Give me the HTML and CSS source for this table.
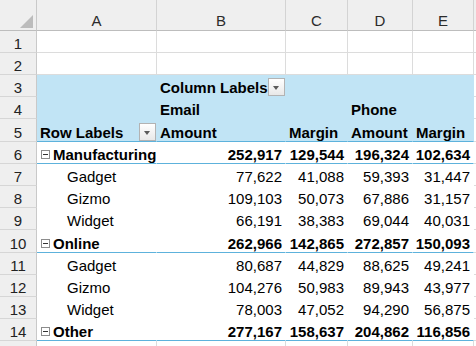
FILE: index.html
```html
<!DOCTYPE html>
<html lang="en">
<head>
    <meta charset="UTF-8">
    <title>Pivot table</title>
    <link rel="stylesheet" href="styles.css">
</head>
<body>
    <div class="sheet">
        <!-- column letters -->
        <div class="corner"></div>
        <div class="col">A</div>
        <div class="col">B</div>
        <div class="col">C</div>
        <div class="col">D</div>
        <div class="col">E</div>
        <div class="col"></div>

        <!-- empty rows -->
        <div class="rn">1</div>
        <div class="c"></div><div class="c"></div><div class="c"></div><div class="c"></div><div class="c"></div><div class="c"></div>
        <div class="rn">2</div>
        <div class="c"></div><div class="c"></div><div class="c"></div><div class="c"></div><div class="c"></div><div class="c"></div>

        <!-- pivot header -->
        <div class="rn">3</div>
        <div class="c ph"></div>
        <div class="c ph b">Column Labels<span class="drop"></span></div>
        <div class="c ph"></div><div class="c ph"></div><div class="c ph"></div>
        <div class="c"></div>

        <div class="rn">4</div>
        <div class="c ph"></div>
        <div class="c ph b">Email</div>
        <div class="c ph"></div>
        <div class="c ph b">Phone</div>
        <div class="c ph"></div>
        <div class="c"></div>

        <div class="rn">5</div>
        <div class="c ph last b">Row Labels<span class="drop"></span></div>
        <div class="c ph last b">Amount</div>
        <div class="c ph last b">Margin</div>
        <div class="c ph last b">Amount</div>
        <div class="c ph last b">Margin</div>
        <div class="c"></div>

        <!-- Manufacturing -->
        <div class="rn">6</div>
        <div class="c pb grp b"><span class="tog"></span>Manufacturing</div>
        <div class="c pb grp b num">252,917</div>
        <div class="c pb grp b num">129,544</div>
        <div class="c pb grp b num">196,324</div>
        <div class="c pb grp b num">102,634</div>
        <div class="c"></div>

        <div class="rn">7</div>
        <div class="c pb item">Gadget</div>
        <div class="c pb num">77,622</div>
        <div class="c pb num">41,088</div>
        <div class="c pb num">59,393</div>
        <div class="c pb num">31,447</div>
        <div class="c"></div>

        <div class="rn">8</div>
        <div class="c pb item">Gizmo</div>
        <div class="c pb num">109,103</div>
        <div class="c pb num">50,073</div>
        <div class="c pb num">67,886</div>
        <div class="c pb num">31,157</div>
        <div class="c"></div>

        <div class="rn">9</div>
        <div class="c pb item">Widget</div>
        <div class="c pb num">66,191</div>
        <div class="c pb num">38,383</div>
        <div class="c pb num">69,044</div>
        <div class="c pb num">40,031</div>
        <div class="c"></div>

        <!-- Online -->
        <div class="rn">10</div>
        <div class="c pb grp b"><span class="tog"></span>Online</div>
        <div class="c pb grp b num">262,966</div>
        <div class="c pb grp b num">142,865</div>
        <div class="c pb grp b num">272,857</div>
        <div class="c pb grp b num">150,093</div>
        <div class="c"></div>

        <div class="rn">11</div>
        <div class="c pb item">Gadget</div>
        <div class="c pb num">80,687</div>
        <div class="c pb num">44,829</div>
        <div class="c pb num">88,625</div>
        <div class="c pb num">49,241</div>
        <div class="c"></div>

        <div class="rn">12</div>
        <div class="c pb item">Gizmo</div>
        <div class="c pb num">104,276</div>
        <div class="c pb num">50,983</div>
        <div class="c pb num">89,943</div>
        <div class="c pb num">43,977</div>
        <div class="c"></div>

        <div class="rn">13</div>
        <div class="c pb item">Widget</div>
        <div class="c pb num">78,003</div>
        <div class="c pb num">47,052</div>
        <div class="c pb num">94,290</div>
        <div class="c pb num">56,875</div>
        <div class="c"></div>

        <!-- Other -->
        <div class="rn">14</div>
        <div class="c pb grp b"><span class="tog"></span>Other</div>
        <div class="c pb grp b num">277,167</div>
        <div class="c pb grp b num">158,637</div>
        <div class="c pb grp b num">204,862</div>
        <div class="c pb grp b num">116,856</div>
        <div class="c"></div>

        <div class="rn"></div>
        <div class="c"></div><div class="c"></div><div class="c"></div><div class="c"></div><div class="c"></div><div class="c"></div>
    </div>
</body>
</html>
```

FILE: styles.css
```css
body {
    margin: 0;
    background: #fff;
    font-family: "Liberation Sans", Arial, sans-serif;
    font-size: 15px;
    color: #000;
    overflow: hidden;
}

.sheet {
    display: grid;
    grid-template-columns: 37px 120px 129px 62px 65px 61px 1fr;
    grid-template-rows: 31px repeat(4, 22px) 23px repeat(4, 22px) 23px repeat(4, 22px) 22px;
    width: 476px;
}

.sheet > div {
    box-sizing: border-box;
    min-width: 0;
}

/* column letters */
.corner {
    position: relative;
    background: #efefef;
    border-right: 1px solid #c9c9c9;
    border-bottom: 1px solid #bdbdbd;
}
.corner::after {
    content: "";
    position: absolute;
    right: 3px;
    bottom: 2px;
    width: 13px;
    height: 13px;
    background: #bcbcbc;
    clip-path: polygon(100% 0, 100% 100%, 0 100%);
}
.col {
    display: flex;
    align-items: flex-end;
    justify-content: center;
    padding-bottom: 2px;
    line-height: 15px;
    background: #efefef;
    color: #2b2b2b;
    border-right: 1px solid #d3d3d3;
    border-bottom: 1px solid #bdbdbd;
}

/* row numbers */
.rn {
    display: flex;
    align-items: flex-end;
    justify-content: center;
    line-height: 15px;
    padding-bottom: 1px;
    background: #efefef;
    color: #222;
    border-right: 1px solid #c9c9c9;
    border-bottom: 1px solid #d6d6d6;
}

/* cells */
.c {
    display: flex;
    align-items: flex-end;
    padding: 0 3px 1px;
    line-height: 15px;
    white-space: nowrap;
    overflow: hidden;
    border-right: 1px solid #dcdcdc;
    border-bottom: 1px solid #dcdcdc;
}
.b {
    font-weight: bold;
}
.num {
    justify-content: flex-end;
}

/* pivot header */
.ph {
    background: #c1e4f5;
    border-color: transparent;
}
.ph.last {
    border-bottom-color: #5db2dc;
}

/* pivot body */
.pb {
    background: #fff;
    border-color: transparent;
}
.grp {
    border-bottom-color: #5db2dc;
    padding-left: 4px;
}
.item {
    padding-left: 30px;
}

/* collapse box */
.tog {
    position: relative;
    flex: none;
    width: 9px;
    height: 9px;
    margin: 0 3px 3px 0;
    box-sizing: border-box;
    border: 1px solid #8c8c8c;
    background: #fff;
}
.tog::after {
    content: "";
    position: absolute;
    left: 1px;
    right: 1px;
    top: 3px;
    height: 1px;
    background: #333;
}

/* filter buttons */
.drop {
    position: relative;
    flex: none;
    margin-left: auto;
    margin-right: -3px;
    margin-bottom: -1px;
    width: 17px;
    height: 18px;
    box-sizing: border-box;
    border: 1px solid #b3b3b3;
    background: linear-gradient(#ffffff, #e8e8e8);
}
.drop::after {
    content: "";
    position: absolute;
    left: 4px;
    top: 7px;
    border-left: 3.5px solid transparent;
    border-right: 3.5px solid transparent;
    border-top: 4px solid #5a5a5a;
}
```
